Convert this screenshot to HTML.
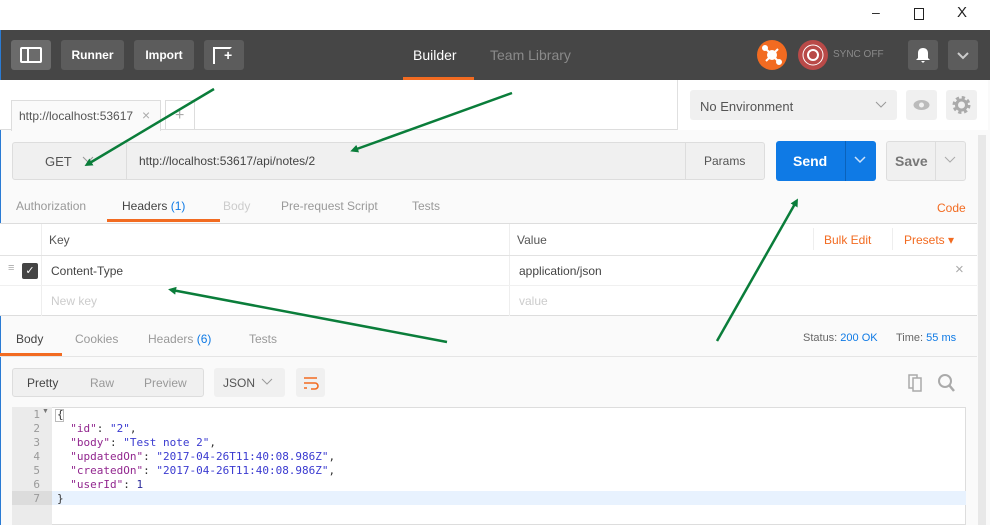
<!DOCTYPE html>
<html><head><meta charset="utf-8"><style>
*{box-sizing:border-box;margin:0;padding:0}
body{width:990px;height:525px;overflow:hidden;background:#fafafa;font-family:"Liberation Sans",sans-serif;font-size:12px;color:#505050;position:relative}
.a{position:absolute}
.btn{position:absolute;background:#5c5c5c;border-radius:3px;color:#fff;font-weight:bold;font-size:12px;text-align:center;line-height:30px}
.t{position:absolute;white-space:nowrap}
.mono{font-family:"DejaVu Sans Mono","Liberation Mono",monospace;font-size:11px}
</style></head><body>
<div class="a" style="left:0;top:0;width:990px;height:30px;background:#fff"></div>
<div class="t" style="left:872px;top:4px;font-size:14px;color:#222">&#8211;</div>
<div class="a" style="left:914px;top:8px;width:10px;height:12px;border:1px solid #222"></div>
<div class="t" style="left:957px;top:4px;font-size:15px;color:#222">X</div>
<div class="a" style="left:0;top:30px;width:990px;height:50px;background:#464646"></div>
<div class="btn" style="left:11px;top:40px;width:40px;height:30px;background:#6b6b6b"><div class="a" style="left:9px;top:7px;width:22px;height:16px;border:2px solid #fff;border-radius:2px"></div><div class="a" style="left:16px;top:7px;width:2px;height:16px;background:#fff"></div></div>
<div class="btn" style="left:61px;top:40px;width:63px;height:30px">Runner</div>
<div class="btn" style="left:134px;top:40px;width:60px;height:30px">Import</div>
<div class="btn" style="left:204px;top:40px;width:40px;height:30px"><div class="a" style="left:9px;top:7px;width:19px;height:17px;border:2px solid #fff;border-right-color:transparent;border-bottom-color:transparent"></div><div class="a" style="left:9px;top:7px;width:2px;height:17px;background:#fff"></div><div class="t" style="left:20px;top:5px;font-size:14px;line-height:20px">+</div></div>
<div class="t" style="left:413px;top:47px;font-size:14px;color:#fff">Builder</div>
<div class="a" style="left:403px;top:77px;width:71px;height:3px;background:#f26b21"></div>
<div class="t" style="left:490px;top:47px;font-size:14px;color:#8a8a8a">Team Library</div>
<div class="a" style="left:757px;top:40px;width:30px;height:30px;border-radius:50%;background:#f26b21"></div>
<svg class="a" style="left:757px;top:40px" width="30" height="30"><g stroke="#fff" stroke-width="2" fill="#fff"><line x1="9" y1="9" x2="21" y2="21"/><line x1="21" y1="9" x2="9" y2="21"/><circle cx="15" cy="15" r="4"/><circle cx="8" cy="8" r="2"/><circle cx="22" cy="22" r="2"/></g></svg>
<div class="a" style="left:798px;top:40px;width:30px;height:30px;border-radius:50%;background:#b94a48"></div>
<svg class="a" style="left:798px;top:40px" width="30" height="30"><circle cx="15" cy="15" r="10" stroke="#fff" fill="none" stroke-width="1"/><circle cx="15" cy="15" r="5" stroke="#fff" fill="none" stroke-width="2"/></svg>
<div class="t" style="left:833px;top:49px;font-size:10px;color:#8a8a8a">SYNC OFF</div>
<div class="btn" style="left:908px;top:40px;width:30px;height:30px"><svg width="30" height="30"><path d="M15 8c-3 0-5 2-5 5v5l-2 2h14l-2-2v-5c0-3-2-5-5-5z M13 21h4l-2 2z" fill="#fff"/></svg></div>
<div class="btn" style="left:948px;top:40px;width:30px;height:30px"><svg width="30" height="30"><path d="M10 13l5 5 5-5" stroke="#ccc" stroke-width="2" fill="none"/></svg></div>
<div class="a" style="left:0;top:30px;width:1px;height:495px;background:#2a7bd4"></div>
<div class="a" style="left:0;top:80px;width:988px;height:50px;background:#fff"></div>
<div class="a" style="left:677px;top:80px;width:1px;height:50px;background:#e0e0e0"></div>
<div class="a" style="left:0;top:129px;width:677px;height:1px;background:#ddd"></div>
<div class="a" style="left:11px;top:100px;width:150px;height:31px;background:#fafafa;border:1px solid #ddd;border-bottom:none"></div>
<div class="t" style="left:19px;top:109px;color:#555">http://localhost:53617</div>
<div class="t" style="left:142px;top:107px;color:#aaa;font-size:14px">&#215;</div>
<div class="a" style="left:165px;top:100px;width:30px;height:30px;border:1px solid #ddd;border-bottom:none"></div>
<div class="t" style="left:175px;top:107px;color:#aaa;font-size:16px">+</div>
<div class="a" style="left:690px;top:90px;width:207px;height:30px;background:#f0f0f0;border-radius:3px"></div>
<div class="t" style="left:700px;top:99px;font-size:13px;color:#555">No Environment</div>
<svg class="a" style="left:874px;top:99px" width="14" height="12"><path d="M2 3l5 5 5-5" stroke="#999" fill="none"/></svg>
<div class="a" style="left:906px;top:90px;width:31px;height:30px;background:#f0f0f0;border-radius:3px"></div>
<svg class="a" style="left:906px;top:90px" width="31" height="30"><ellipse cx="15.5" cy="15" rx="8" ry="5" fill="#bbb"/><circle cx="15.5" cy="15" r="2.5" fill="#f0f0f0"/></svg>
<div class="a" style="left:946px;top:90px;width:31px;height:30px;background:#f0f0f0;border-radius:3px"></div>
<svg class="a" style="left:946px;top:90px" width="31" height="30"><circle cx="15.5" cy="15" r="7" fill="none" stroke="#aaa" stroke-width="4" stroke-dasharray="3 2.5"/><circle cx="15.5" cy="15" r="5" fill="none" stroke="#aaa" stroke-width="3"/></svg>
<div class="a" style="left:978px;top:135px;width:8px;height:390px;background:#e8e8e8"></div>
<div class="a" style="left:12px;top:142px;width:753px;height:38px;background:#f0f0f0;border:1px solid #ddd;border-radius:3px"></div>
<div class="a" style="left:126px;top:142px;width:1px;height:38px;background:#ddd"></div>
<div class="a" style="left:685px;top:142px;width:1px;height:38px;background:#ddd"></div>
<div class="t" style="left:45px;top:154px;font-size:13px;color:#555">GET</div>
<svg class="a" style="left:82px;top:155px" width="12" height="10"><path d="M1 2l5 5 5-5" stroke="#999" fill="none"/></svg>
<div class="t" style="left:139px;top:154px;font-size:12px;color:#444">http://localhost:53617/api/notes/2</div>
<div class="t" style="left:704px;top:154px;font-size:12px;color:#555">Params</div>
<div class="a" style="left:776px;top:141px;width:100px;height:40px;background:#0f7ae5;border-radius:3px"></div>
<div class="a" style="left:845px;top:141px;width:1px;height:40px;background:#0a62bb"></div>
<div class="t" style="left:793px;top:153px;font-size:14px;font-weight:bold;color:#fff">Send</div>
<svg class="a" style="left:853px;top:155px" width="14" height="10"><path d="M2 2l5 5 5-5" stroke="#cfe3fa" fill="none" stroke-width="1.5"/></svg>
<div class="a" style="left:886px;top:141px;width:80px;height:40px;background:#f0f0f0;border:1px solid #ddd;border-radius:3px"></div>
<div class="a" style="left:935px;top:141px;width:1px;height:40px;background:#ddd"></div>
<div class="t" style="left:895px;top:153px;font-size:14px;font-weight:bold;color:#777">Save</div>
<svg class="a" style="left:944px;top:155px" width="12" height="10"><path d="M1 2l5 5 5-5" stroke="#aaa" fill="none"/></svg>
<div class="t" style="left:16px;top:199px;font-size:12px;color:#999">Authorization</div>
<div class="t" style="left:122px;top:199px;font-size:12px;color:#444">Headers <span style="color:#0f7ae5">(1)</span></div>
<div class="a" style="left:107px;top:219px;width:113px;height:3px;background:#f26b21"></div>
<div class="t" style="left:223px;top:199px;font-size:12px;color:#ccc">Body</div>
<div class="t" style="left:281px;top:199px;font-size:12px;color:#999">Pre-request Script</div>
<div class="t" style="left:412px;top:199px;font-size:12px;color:#999">Tests</div>
<div class="t" style="left:937px;top:201px;font-size:12px;color:#f26b21">Code</div>
<div class="a" style="left:0;top:223px;width:977px;height:93px;background:#fff;border-top:1px solid #ddd;border-bottom:1px solid #ddd"></div>
<div class="a" style="left:41px;top:224px;width:1px;height:92px;background:#eee"></div>
<div class="a" style="left:509px;top:224px;width:1px;height:92px;background:#eee"></div>
<div class="a" style="left:0;top:255px;width:977px;height:1px;background:#e2e2e2"></div>
<div class="a" style="left:0;top:285px;width:977px;height:1px;background:#f0f0f0"></div>
<div class="t" style="left:49px;top:233px;color:#555">Key</div>
<div class="t" style="left:517px;top:233px;color:#555">Value</div>
<div class="a" style="left:813px;top:228px;width:1px;height:22px;background:#eee"></div>
<div class="a" style="left:892px;top:228px;width:1px;height:22px;background:#eee"></div>
<div class="t" style="left:824px;top:233px;color:#f26b21">Bulk Edit</div>
<div class="t" style="left:904px;top:233px;color:#f26b21">Presets &#9662;</div>
<div class="t" style="left:8px;top:262px;color:#aaa;font-size:11px">&#8801;</div>
<div class="a" style="left:22px;top:263px;width:16px;height:16px;background:#444;border-radius:2px;color:#fff;font-size:11px;text-align:center;line-height:16px">&#10003;</div>
<div class="t" style="left:51px;top:264px;color:#444">Content-Type</div>
<div class="t" style="left:519px;top:264px;color:#444">application/json</div>
<div class="t" style="left:955px;top:261px;color:#aaa;font-size:15px">&#215;</div>
<div class="t" style="left:51px;top:294px;color:#ccc">New key</div>
<div class="t" style="left:519px;top:294px;color:#ccc">value</div>
<div class="t" style="left:16px;top:332px;color:#444">Body</div>
<div class="a" style="left:0;top:353px;width:62px;height:3px;background:#f26b21"></div>
<div class="a" style="left:0;top:356px;width:977px;height:1px;background:#e5e5e5"></div>
<div class="t" style="left:75px;top:332px;color:#999">Cookies</div>
<div class="t" style="left:148px;top:332px;color:#999">Headers <span style="color:#0f7ae5">(6)</span></div>
<div class="t" style="left:249px;top:332px;color:#999">Tests</div>
<div class="t" style="left:803px;top:332px;font-size:11px;color:#666">Status: <span style="color:#0f7ae5">200 OK</span></div>
<div class="t" style="left:896px;top:332px;font-size:11px;color:#666">Time: <span style="color:#0f7ae5">55 ms</span></div>
<div class="a" style="left:12px;top:368px;width:192px;height:29px;background:#f0f0f0;border:1px solid #ddd;border-radius:3px"></div>
<div class="t" style="left:27px;top:376px;color:#444">Pretty</div>
<div class="t" style="left:90px;top:376px;color:#999">Raw</div>
<div class="t" style="left:144px;top:376px;color:#999">Preview</div>
<div class="a" style="left:214px;top:368px;width:71px;height:29px;background:#f0f0f0;border-radius:3px"></div>
<div class="t" style="left:223px;top:376px;color:#555">JSON</div>
<svg class="a" style="left:261px;top:377px" width="12" height="10"><path d="M1 2l5 5 5-5" stroke="#999" fill="none"/></svg>
<div class="a" style="left:296px;top:368px;width:29px;height:29px;background:#f0f0f0;border-radius:3px"></div>
<svg class="a" style="left:296px;top:368px" width="29" height="29"><path d="M8 10h13M8 15h11a3 3 0 0 1 0 6h-4M8 20h3" stroke="#f26b21" stroke-width="1.6" fill="none"/></svg>
<svg class="a" style="left:906px;top:372px" width="50" height="22"><rect x="3" y="3" width="8" height="13" fill="none" stroke="#aaa" stroke-width="1.5"/><rect x="7" y="6" width="8" height="13" fill="#fafafa" stroke="#aaa" stroke-width="1.5"/><circle cx="39" cy="9" r="6" fill="none" stroke="#aaa" stroke-width="2"/><line x1="43" y1="13" x2="48" y2="19" stroke="#aaa" stroke-width="2.5"/></svg>
<div class="a" style="left:12px;top:407px;width:954px;height:118px;background:#fff;border:1px solid #ddd"></div>
<div class="a" style="left:12px;top:407px;width:40px;height:118px;background:#ebebeb"></div>
<div class="a" style="left:52px;top:491px;width:914px;height:14px;background:#e8f2fe"></div>
<div class="a" style="left:12px;top:491px;width:40px;height:14px;background:#dcdcdc"></div>
<div class="a" style="left:55px;top:409px;width:9px;height:13px;border:1px solid #bbb"></div>
<div class="a mono" style="left:12px;top:408px;width:28px;text-align:right;line-height:14px;color:#999">1<br>2<br>3<br>4<br>5<br>6<br>7</div>
<div class="t" style="left:42px;top:408px;font-size:7px;color:#777">&#9660;</div>
<div class="a mono" style="left:57px;top:408px;line-height:14px;white-space:pre;color:#333">{
  <span style="color:#92278f">"id"</span>: <span style="color:#3a3ad0">"2"</span>,
  <span style="color:#92278f">"body"</span>: <span style="color:#3a3ad0">"Test note 2"</span>,
  <span style="color:#92278f">"updatedOn"</span>: <span style="color:#3a3ad0">"2017-04-26T11:40:08.986Z"</span>,
  <span style="color:#92278f">"createdOn"</span>: <span style="color:#3a3ad0">"2017-04-26T11:40:08.986Z"</span>,
  <span style="color:#92278f">"userId"</span>: <span style="color:#2a2a9a">1</span>
}</div>
<svg class="a" style="left:0;top:0" width="990" height="525">
<defs><marker id="m" markerWidth="8" markerHeight="8" refX="4" refY="4" orient="auto" markerUnits="userSpaceOnUse"><path d="M0 0L8 4L0 8z" fill="#0a7d3a"/></marker></defs>
<g stroke="#0a7d3a" stroke-width="2.5" fill="none">
<line x1="214" y1="89" x2="88" y2="164" marker-end="url(#m)"/>
<line x1="512" y1="93" x2="354" y2="150" marker-end="url(#m)"/>
<line x1="447" y1="342" x2="172" y2="290" marker-end="url(#m)"/>
<line x1="717" y1="341" x2="796" y2="202" marker-end="url(#m)"/>
</g></svg>
</body></html>
